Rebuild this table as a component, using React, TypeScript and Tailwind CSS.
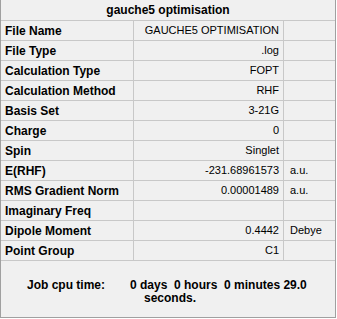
const rows: { label: string; value: string; unit?: string }[] = [
  { label: "File Name", value: "GAUCHE5 OPTIMISATION" },
  { label: "File Type", value: ".log" },
  { label: "Calculation Type", value: "FOPT" },
  { label: "Calculation Method", value: "RHF" },
  { label: "Basis Set", value: "3-21G" },
  { label: "Charge", value: "0" },
  { label: "Spin", value: "Singlet" },
  { label: "E(RHF)", value: "-231.68961573", unit: "a.u." },
  { label: "RMS Gradient Norm", value: "0.00001489", unit: "a.u." },
  { label: "Imaginary Freq", value: "" },
  { label: "Dipole Moment", value: "0.4442", unit: "Debye" },
  { label: "Point Group", value: "C1" },
]

export default function App() {
  return (
    <div className="w-[337px] h-[319px] bg-white font-['Liberation_Sans',Arial,sans-serif] text-black">
      <div className="w-[336px] h-[318px] bg-[#f0f0f0] border-l border-r border-b border-[#a0a0a0] flex flex-col">
        {/* title */}
        <div className="h-[21px] shrink-0 border-b border-[#c8c8c8] flex items-center justify-center text-[12px] font-bold">
          gauche5 optimisation
        </div>

        {/* property grid */}
        {rows.map((r) => (
          <div key={r.label} className="h-[20px] shrink-0 flex border-b border-[#c8c8c8]">
            <div className="w-[133px] shrink-0 border-r border-[#c8c8c8] flex items-center pl-[4px] text-[12px] font-bold">
              {r.label}
            </div>
            <div className="w-[150px] shrink-0 border-r border-[#c8c8c8] flex items-center justify-end pr-[4px] text-[11px]">
              {r.value}
            </div>
            <div className="flex-1 flex items-center pl-[6px] text-[11px]">{r.unit}</div>
          </div>
        ))}

        {/* job timing */}
        <div className="flex-1 flex pt-[18px] text-[12px] font-bold leading-[13px]">
          <div className="pl-[26px] w-[129px] shrink-0">Job cpu time:</div>
          <div className="flex flex-col">
            <span className="whitespace-pre">0 days  0 hours  0 minutes 29.0</span>
            <span className="pl-[14px]">seconds.</span>
          </div>
        </div>
      </div>
    </div>
  )
}
